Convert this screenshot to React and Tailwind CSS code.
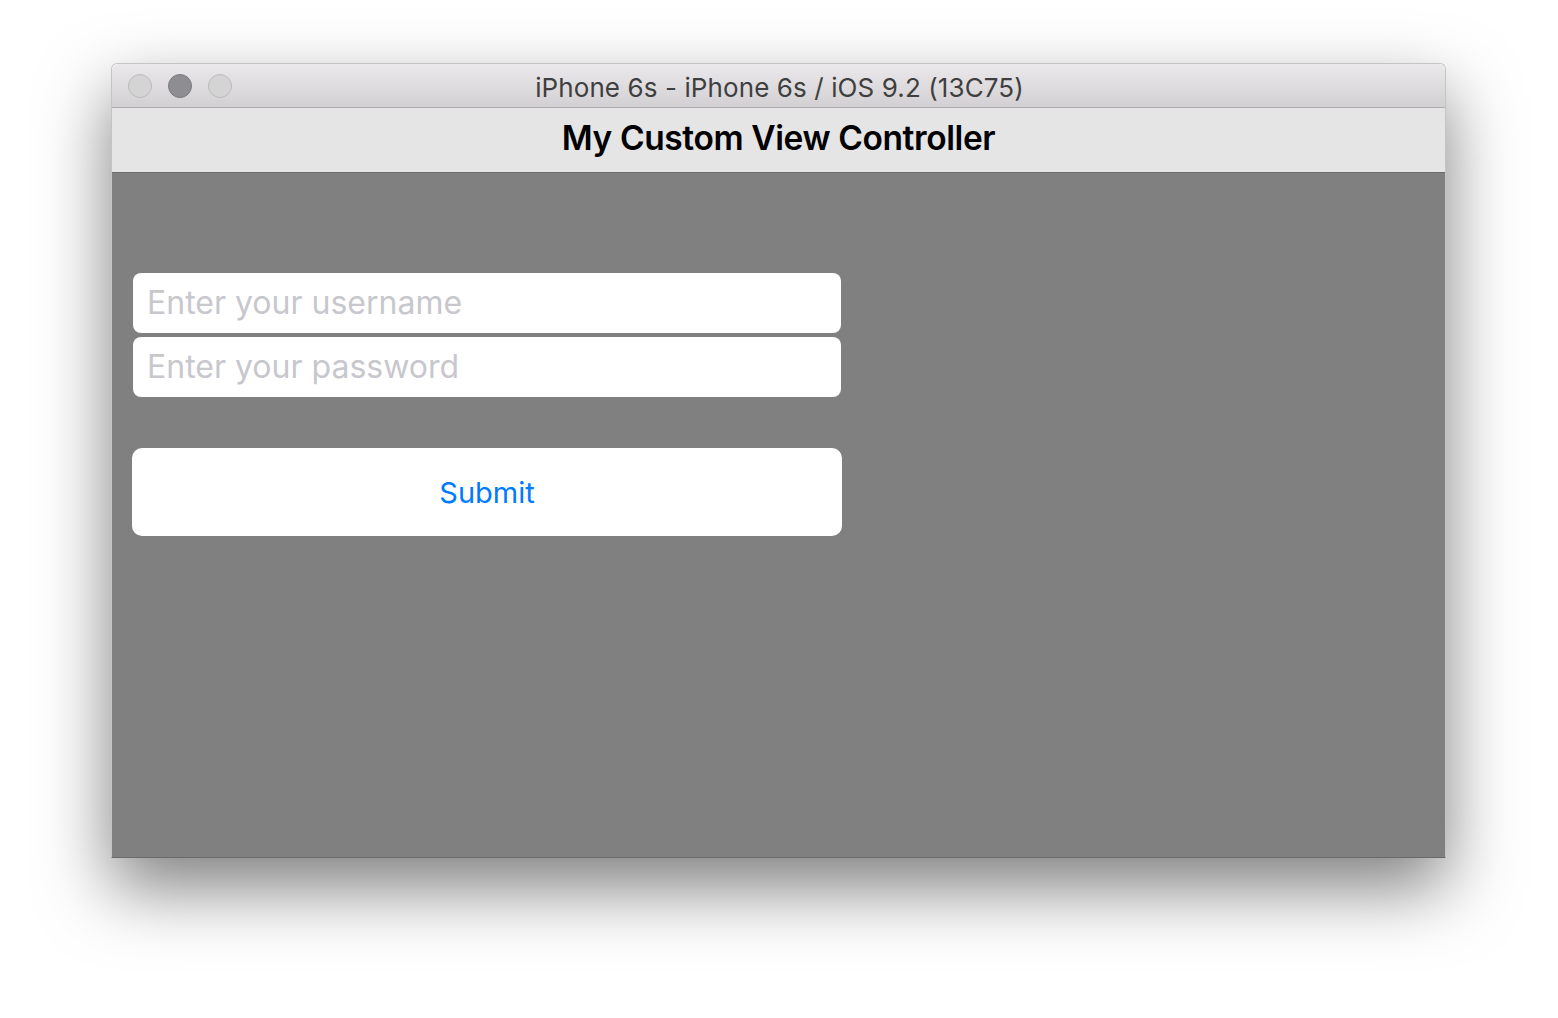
import React from 'react';

const sysFont = { fontFamily: 'Inter, "Liberation Sans", Arial, sans-serif' };

function TrafficLights() {
  return (
    <div className="flex items-center gap-[16px] pt-[1px]">
      <div className="w-[24px] h-[24px] rounded-full bg-[#d5d4d5] border border-[#bdbcbd]" />
      <div className="w-[24px] h-[24px] rounded-full bg-[#8e8d91] border border-[#7a797c]" />
      <div className="w-[24px] h-[24px] rounded-full bg-[#d5d4d5] border border-[#bdbcbd]" />
    </div>
  );
}

export default function App() {
  return (
    <div className="w-[1558px] h-[1018px] bg-white pt-[63px] pl-[111px] overflow-hidden" style={sysFont}>
      <div className="w-[1335px] h-[795px] flex flex-col rounded-t-[6px] shadow-[0_30px_70px_rgba(0,0,0,0.5)] border border-[#c4c4c4] border-b-[#6a6a6a]">
        {/* Title bar */}
        <div className="relative h-[44px] flex items-center px-[16px] rounded-t-[6px] bg-gradient-to-b from-[#ebe9eb] to-[#d2d0d2] border-b border-[#aeadae]">
          <TrafficLights />
          <div className="absolute inset-0 flex items-center justify-center text-[26px] text-[#3f3f3f] pt-[3px] pl-[2px] tracking-[0.1px]">
            iPhone 6s - iPhone 6s / iOS 9.2 (13C75)
          </div>
        </div>

        {/* Navigation bar */}
        <div className="h-[65px] flex items-center justify-center bg-[#e5e5e5] border-b border-[#6d6d6d] pb-[4px]">
          <span className="text-[33.5px] font-semibold text-black tracking-[-0.4px]">My Custom View Controller</span>
        </div>

        {/* Content */}
        <div className="flex-1 bg-[#808080] pt-[100px] pl-[21px]">
          <div className="w-[708px] flex flex-col gap-[4px]">
            <div className="h-[60px] rounded-[8px] bg-white flex items-center px-[14px] text-[32px] text-[#c7c7cd]">
              Enter your username
            </div>
            <div className="h-[60px] rounded-[8px] bg-white flex items-center px-[14px] text-[32px] text-[#c7c7cd]">
              Enter your password
            </div>
          </div>
          <div className="mt-[51px] -ml-[1px] w-[710px] h-[88px] rounded-[10px] bg-white flex items-center justify-center text-[29px] text-[#007aff] pt-[1px]">
            Submit
          </div>
        </div>
      </div>
    </div>
  );
}
